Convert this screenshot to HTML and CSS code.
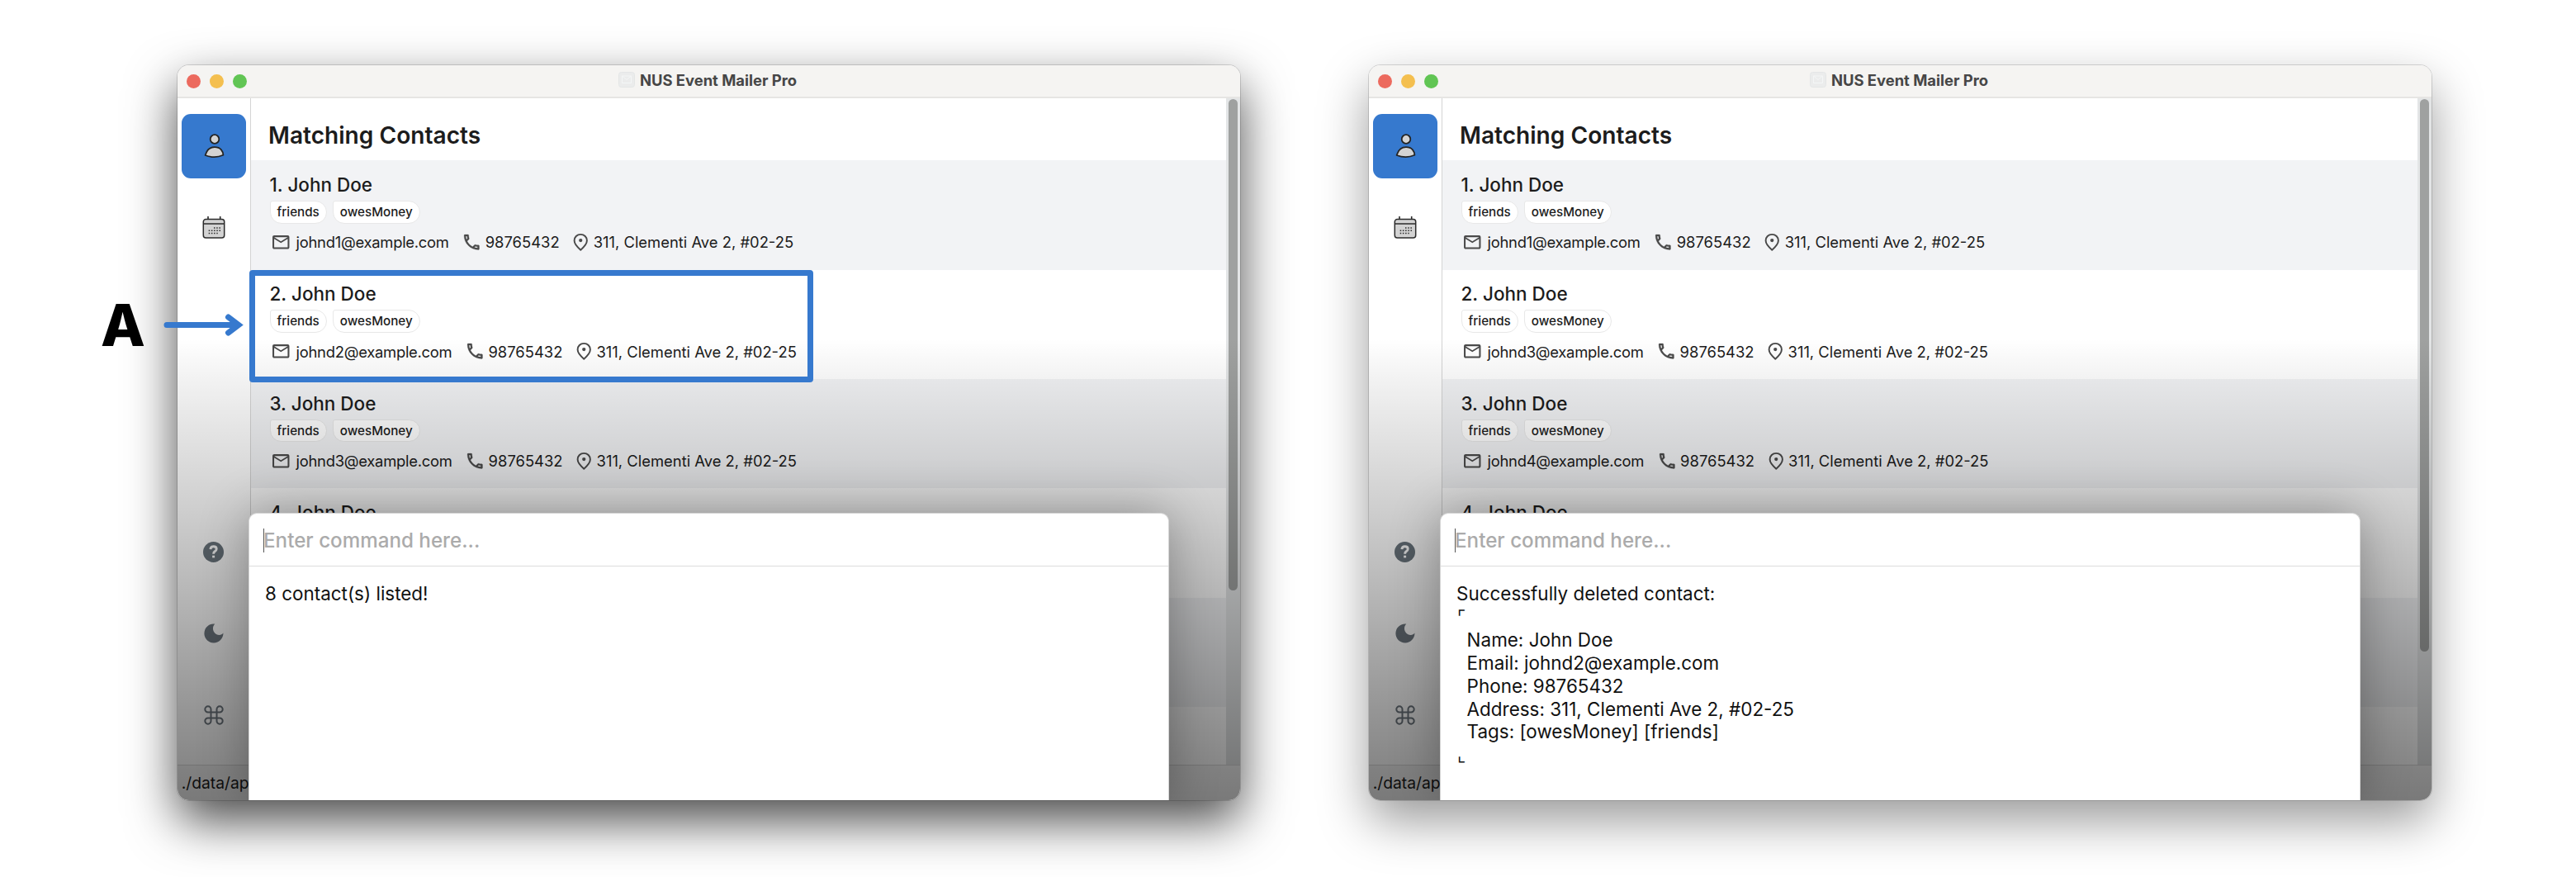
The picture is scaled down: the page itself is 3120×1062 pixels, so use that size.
FILE: index.html
```html
<!DOCTYPE html>
<html lang="en">
<head>
<meta charset="utf-8">
<title>NUS Event Mailer Pro</title>
<link rel="stylesheet" href="styles.css">
</head>
<body>
<svg class="symbols" aria-hidden="true">
  <symbol id="person" viewBox="0 0 26 32">
    <g fill="#d3d3d3" stroke="#242424" stroke-width="1.8" stroke-linejoin="round">
      <circle cx="14" cy="7.5" r="5.3"/>
      <path d="M2.6 27C3.8 25.6 4 17.2 14 17.2C21.500 17.2 24.200 22.500 24.400 26.800Q14 31.400 2.600 27Z"/>
    </g>
  </symbol>
  <symbol id="calendar" viewBox="0 0 30 30">
    <g fill="#d3d3d3" stroke="#2b2b2b" stroke-width="1.5">
      <path d="M8 1v4M22.700 1v4" stroke-width="1.6"/>
      <rect x="2.300" y="4.600" width="25.400" height="22.400" rx="3"/>
      <path d="M2.300 10h25.400"/>
      <path d="M15 15h8M8.700 18.300h14.300M8.700 21.600h11" stroke-width="1.500" stroke-dasharray="1.500 1.700"/>
    </g>
  </symbol>
  <symbol id="help" viewBox="0 0 25 25">
    <circle cx="12.500" cy="12.500" r="12.500" fill="#6a757d"/>
    <path d="M8.900 9.200Q9.100 5.700 12.600 5.700Q16.200 5.700 16.200 8.700Q16.200 10.400 14.200 11.700Q12.600 12.800 12.600 14.700" fill="none" stroke="#fff" stroke-width="2.900"/>
    <path d="M11.100 16.700h3v2.700h-3z" fill="#fff"/>
  </symbol>
  <symbol id="moon" viewBox="0 0 24 24">
    <path d="M13.300 .6C7 -.6 .4 4.700 .4 12C.4 18.400 5.600 23.500 11.900 23.500C18.300 23.500 23.400 18.400 23.500 11.500C20.700 15.500 14.500 14.300 12 10C10.200 6.600 10.800 3 13.300 .6Z" fill="#6c757d"/>
  </symbol>
  <symbol id="command" viewBox="0 0 24 24">
    <path d="M8.500 8.500h7v7h-7zM8.500 8.500V5A3.600 3.600 0 1 0 5 8.500zM15.500 8.500H19A3.600 3.600 0 1 0 15.500 5zM15.500 15.500V19A3.600 3.600 0 1 0 19 15.500zM8.500 15.500H5A3.600 3.600 0 1 0 8.500 19z" fill="none" stroke="#6c757d" stroke-width="2"/>
  </symbol>
  <symbol id="mail" viewBox="0 0 24 24">
    <path d="M22 6c0-1.100-.9-2-2-2H4c-1.100 0-2 .9-2 2v12c0 1.100.9 2 2 2h16c1.100 0 2-.9 2-2V6zm-2 0l-8 5-8-5h16zm0 12H4V8l8 5 8-5v10z" fill="#4a4a4a"/>
  </symbol>
  <symbol id="phone" viewBox="0 0 24 24">
    <path d="M6.540 5c.06.89.21 1.760.45 2.590l-1.200 1.200c-.41-1.200-.67-2.470-.76-3.790h1.510m9.860 12.020c.85.24 1.720.39 2.600.45v1.490c-1.320-.09-2.590-.35-3.800-.75l1.200-1.190M7.500 3H4c-.55 0-1 .45-1 1 0 9.390 7.610 17 17 17 .55 0 1-.45 1-1v-3.490c0-.55-.45-1-1-1-1.240 0-2.450-.2-3.570-.57-.1-.04-.21-.05-.31-.05-.26 0-.51.1-.71.29l-2.200 2.200c-2.830-1.450-5.150-3.760-6.590-6.590l2.200-2.200c.28-.28.36-.67.25-1.020C8.700 6.450 8.500 5.250 8.500 4c0-.55-.45-1-1-1z" fill="#4a4a4a" stroke="#4a4a4a" stroke-width=".3"/>
  </symbol>
  <symbol id="pin" viewBox="0 0 24 24">
    <path d="M12 2.800c4.300 0 7.500 3.300 7.500 7.300 0 4.600-4.800 8.800-7.500 11.100-2.700-2.300-7.500-6.500-7.500-11.100 0-4 3.200-7.300 7.500-7.300z" fill="none" stroke="#4a4a4a" stroke-width="1.900" stroke-linejoin="round"/>
    <circle cx="12" cy="9.900" r="2.100" fill="#4a4a4a"/>
  </symbol>
  <symbol id="app" viewBox="0 0 20 20">
    <rect x=".5" y=".5" width="19" height="18" rx="3" fill="#ebecec" stroke="#e4e6e6"/>
    <path d="M4.500 5h11v8.500h-11zM4.500 5l5.500 4.500 5.500-4.500" fill="none" stroke="#f4f6f6"/>
  </symbol>
</svg>

<main class="stage">
  <section class="window window-active">
    <header class="titlebar">
      <div class="lights"><i class="light close"></i><i class="light minimize"></i><i class="light maximize"></i></div>
      <h1 class="title"><svg class="app-icon"><use href="#app"/></svg>NUS Event Mailer Pro</h1>
    </header>
    <div class="content">
      <nav class="sidebar">
        <a class="nav-item selected"><svg class="icon-person"><use href="#person"/></svg></a>
        <a class="nav-item"><svg class="icon-calendar"><use href="#calendar"/></svg></a>
        <a class="nav-item first-bottom"><svg class="icon-help"><use href="#help"/></svg></a>
        <a class="nav-item"><svg class="icon-tool"><use href="#moon"/></svg></a>
        <a class="nav-item"><svg class="icon-tool"><use href="#command"/></svg></a>
      </nav>
      <div class="list">
        <h2 class="heading">Matching Contacts</h2>
        <article class="contact">
          <h3 class="name">1. John Doe</h3>
          <div class="tags"><span class="tag">friends</span><span class="tag">owesMoney</span></div>
          <div class="details"><svg class="mail"><use href="#mail"/></svg><span class="email">johnd1@example.com</span><svg class="phone"><use href="#phone"/></svg><span>98765432</span><svg class="pin"><use href="#pin"/></svg><span>311, Clementi Ave 2, #02-25</span></div>
        </article>
        <article class="contact">
          <h3 class="name">2. John Doe</h3>
          <div class="tags"><span class="tag">friends</span><span class="tag">owesMoney</span></div>
          <div class="details"><svg class="mail"><use href="#mail"/></svg><span class="email">johnd2@example.com</span><svg class="phone"><use href="#phone"/></svg><span>98765432</span><svg class="pin"><use href="#pin"/></svg><span>311, Clementi Ave 2, #02-25</span></div>
        </article>
        <article class="contact">
          <h3 class="name">3. John Doe</h3>
          <div class="tags"><span class="tag">friends</span><span class="tag">owesMoney</span></div>
          <div class="details"><svg class="mail"><use href="#mail"/></svg><span class="email">johnd3@example.com</span><svg class="phone"><use href="#phone"/></svg><span>98765432</span><svg class="pin"><use href="#pin"/></svg><span>311, Clementi Ave 2, #02-25</span></div>
        </article>
        <article class="contact"><h3 class="name">4. John Doe</h3></article>
        <article class="contact"></article>
        <article class="contact"></article>
      </div>
      <div class="scrollbar"><div class="thumb"></div></div>
    </div>
    <footer class="status">./data/ap</footer>
    <div class="shade"></div>
    <div class="panel">
      <div class="command"><span class="placeholder">Enter command here...</span></div>
      <div class="result">8 contact(s) listed!</div>
    </div>
  </section>

  <section class="window">
    <header class="titlebar">
      <div class="lights"><i class="light close"></i><i class="light minimize"></i><i class="light maximize"></i></div>
      <h1 class="title"><svg class="app-icon"><use href="#app"/></svg>NUS Event Mailer Pro</h1>
    </header>
    <div class="content">
      <nav class="sidebar">
        <a class="nav-item selected"><svg class="icon-person"><use href="#person"/></svg></a>
        <a class="nav-item"><svg class="icon-calendar"><use href="#calendar"/></svg></a>
        <a class="nav-item first-bottom"><svg class="icon-help"><use href="#help"/></svg></a>
        <a class="nav-item"><svg class="icon-tool"><use href="#moon"/></svg></a>
        <a class="nav-item"><svg class="icon-tool"><use href="#command"/></svg></a>
      </nav>
      <div class="list">
        <h2 class="heading">Matching Contacts</h2>
        <article class="contact">
          <h3 class="name">1. John Doe</h3>
          <div class="tags"><span class="tag">friends</span><span class="tag">owesMoney</span></div>
          <div class="details"><svg class="mail"><use href="#mail"/></svg><span class="email">johnd1@example.com</span><svg class="phone"><use href="#phone"/></svg><span>98765432</span><svg class="pin"><use href="#pin"/></svg><span>311, Clementi Ave 2, #02-25</span></div>
        </article>
        <article class="contact">
          <h3 class="name">2. John Doe</h3>
          <div class="tags"><span class="tag">friends</span><span class="tag">owesMoney</span></div>
          <div class="details"><svg class="mail"><use href="#mail"/></svg><span class="email">johnd3@example.com</span><svg class="phone"><use href="#phone"/></svg><span>98765432</span><svg class="pin"><use href="#pin"/></svg><span>311, Clementi Ave 2, #02-25</span></div>
        </article>
        <article class="contact">
          <h3 class="name">3. John Doe</h3>
          <div class="tags"><span class="tag">friends</span><span class="tag">owesMoney</span></div>
          <div class="details"><svg class="mail"><use href="#mail"/></svg><span class="email">johnd4@example.com</span><svg class="phone"><use href="#phone"/></svg><span>98765432</span><svg class="pin"><use href="#pin"/></svg><span>311, Clementi Ave 2, #02-25</span></div>
        </article>
        <article class="contact"><h3 class="name">4. John Doe</h3></article>
        <article class="contact"></article>
        <article class="contact"></article>
      </div>
      <div class="scrollbar"><div class="thumb thumb-long"></div></div>
    </div>
    <footer class="status">./data/ap</footer>
    <div class="shade"></div>
    <div class="panel">
      <div class="command"><span class="placeholder">Enter command here...</span></div>
      <div class="result">Successfully deleted contact:
<span class="corner">⌜</span>
  Name: John Doe
  Email: johnd2@example.com
  Phone: 98765432
  Address: 311, Clementi Ave 2, #02-25
  Tags: [owesMoney] [friends]
<span class="corner">⌞</span></div>
    </div>
  </section>

  <div class="callout-label">A</div>
  <svg class="callout-arrow" viewBox="0 0 100 34"><path d="M4 16.500H90M78.500 7L91 16.500L78.500 26" fill="none" stroke="#3679ce" stroke-width="7" stroke-linecap="round"/></svg>
  <div class="callout-box"></div>
</main>
</body>
</html>
```
FILE: styles.css
```css
* { box-sizing: border-box; }

body {
  margin: 0;
  background: #fff;
  color: #1c1c1c;
  font-family: Inter, "Liberation Sans", sans-serif;
}

.symbols { display: none; }

h1, h2, h3 { margin: 0; }

.stage {
  position: relative;
  display: flex;
  gap: 156px;
  width: 3120px;
  height: 1062px;
  padding: 79px 0 0 215px;
  overflow: hidden;
}

/* Application window */
.window {
  position: relative;
  display: flex;
  flex-direction: column;
  flex: none;
  width: 1287px;
  height: 890px;
  border-radius: 14px;
  background: #fff;
  box-shadow: 0 0 0 1px rgba(0, 0, 0, .14), 0 25px 60px rgba(0, 0, 0, .4);
}
.window-active {
  box-shadow: 0 0 0 1px rgba(0, 0, 0, .14), 0 25px 60px rgba(0, 0, 0, .71);
}

.titlebar {
  display: grid;
  grid-template-columns: 100px 1fr 100px;
  align-items: center;
  flex: none;
  height: 40px;
  border-bottom: 2px solid #e6e5e3;
  border-radius: 14px 14px 0 0;
  background: #f5f4f2;
}
.lights { display: flex; gap: 11px; padding-left: 11px; }
.light { width: 17px; height: 17px; border-radius: 50%; }
.close { background: #ec6a5e; }
.minimize { background: #f4bf4f; }
.maximize { background: #61c554; }
.title {
  display: flex;
  align-items: center;
  justify-content: center;
  gap: 6px;
  padding: 0 3px 2px 0;
  font-size: 18.4px;
  font-weight: 700;
  line-height: 34px;
  color: #464646;
}
.app-icon { width: 20px; height: 20px; }

.content { display: flex; flex: none; height: 807px; }

/* Navigation */
.sidebar {
  display: flex;
  flex-direction: column;
  gap: 21px;
  flex: none;
  width: 89px;
  padding: 19px 0 21px 4.500px;
  border-right: 1px solid #d4d4d4;
}
.nav-item {
  display: flex;
  align-items: center;
  justify-content: center;
  flex: none;
  width: 78px;
  height: 78px;
  border-radius: 11px;
}
.selected { background: #3679ce; }
.first-bottom { margin-top: auto; }
.icon-person { width: 26px; height: 32px; }
.icon-calendar { width: 30px; height: 30px; }
.icon-help { width: 25px; height: 25px; }
.icon-tool { width: 24px; height: 24px; }

/* Contact list */
.list { flex: 1; overflow: hidden; }
.heading {
  height: 75.300px;
  padding: 21px 0 0 21px;
  font-size: 28.100px;
  font-weight: 600;
  line-height: 48.600px;
}
.contact { height: 132.400px; padding: 15.700px 0 0 22.500px; }
.contact:nth-of-type(odd) { background: #f2f3f5; }
.name { font-size: 22.500px; font-weight: 500; line-height: 28.500px; }
.tags { display: flex; gap: 7px; margin-top: 4.600px; }
.tag {
  padding: 0 8px;
  border: 1px solid #e8e8e8;
  border-radius: 3px 14px 14px 14px;
  background: #fff;
  font-size: 15.200px;
  font-weight: 500;
  line-height: 25.500px;
}
.details {
  display: flex;
  align-items: center;
  margin-top: 8.700px;
  padding-left: 1.500px;
  font-size: 18.400px;
  line-height: 28px;
}
.details svg { flex: none; width: 24.500px; height: 24.500px; }
.mail { margin-right: 6px; }
.email { letter-spacing: -.26px; }
.phone { margin: 0 4px 0 15.500px; }
.pin { margin: 0 3px 0 13.500px; }

.scrollbar {
  flex: none;
  width: 17px;
  padding: 1px 3px 0 3px;
  background: #e3e5e6;
}
.thumb { height: 595px; border-radius: 6px; background: #9fa1a0; }
.thumb-long { height: 669px; }

.status {
  flex: none;
  height: 43px;
  padding-left: 4.700px;
  border-top: 1px solid #d9d9d9;
  border-radius: 0 0 14px 14px;
  background: #f4f4f4;
  font-size: 19.300px;
  line-height: 43px;
}

/* Dimming that deepens towards the command panel */
.shade {
  position: absolute;
  inset: 331px 0 0 0;
  border-radius: 0 0 14px 14px;
  background: linear-gradient(rgba(0, 0, 0, 0), rgba(0, 0, 0, .05) 49px, rgba(0, 0, 0, .17) 181px, rgba(0, 0, 0, .29) 314px, rgba(0, 0, 0, .41) 446px, rgba(0, 0, 0, .47) 516px, rgba(0, 0, 0, .5));
}

/* Command panel */
.panel {
  position: absolute;
  left: 86px;
  top: 542px;
  width: 1115px;
  height: 348px;
  border: 1px solid #d5d5d5;
  border-bottom: 0;
  border-radius: 10px 10px 0 0;
  background: #fff;
  box-shadow: 0 0 60px rgba(0, 0, 0, .32);
  clip-path: inset(-100px -86px 0 -86px);
}
.command {
  display: flex;
  align-items: center;
  height: 64px;
  padding: 1px 0 0 17px;
  border-bottom: 1px solid #dcdcdc;
}
.placeholder {
  border-left: 1px solid #555;
  color: #ababab;
  font-size: 24.200px;
  font-weight: 500;
  line-height: 29px;
  text-indent: -1px;
}
.result {
  padding: 19px 0 0 19px;
  color: #111;
  font-size: 22.450px;
  line-height: 27.900px;
  white-space: pre;
}
.corner { padding-left: 1px; font-size: 22px; line-height: 0; }

/* Annotation */
.callout-label {
  position: absolute;
  left: 122px;
  top: 359px;
  color: #000;
  font-size: 70px;
  font-weight: 800;
  line-height: 70px;
}
.callout-arrow { position: absolute; left: 198px; top: 377px; width: 100px; height: 34px; }
.callout-box {
  position: absolute;
  left: 302px;
  top: 327px;
  width: 683px;
  height: 136px;
  border: 7px solid #3679ce;
  border-radius: 4px;
}
```
